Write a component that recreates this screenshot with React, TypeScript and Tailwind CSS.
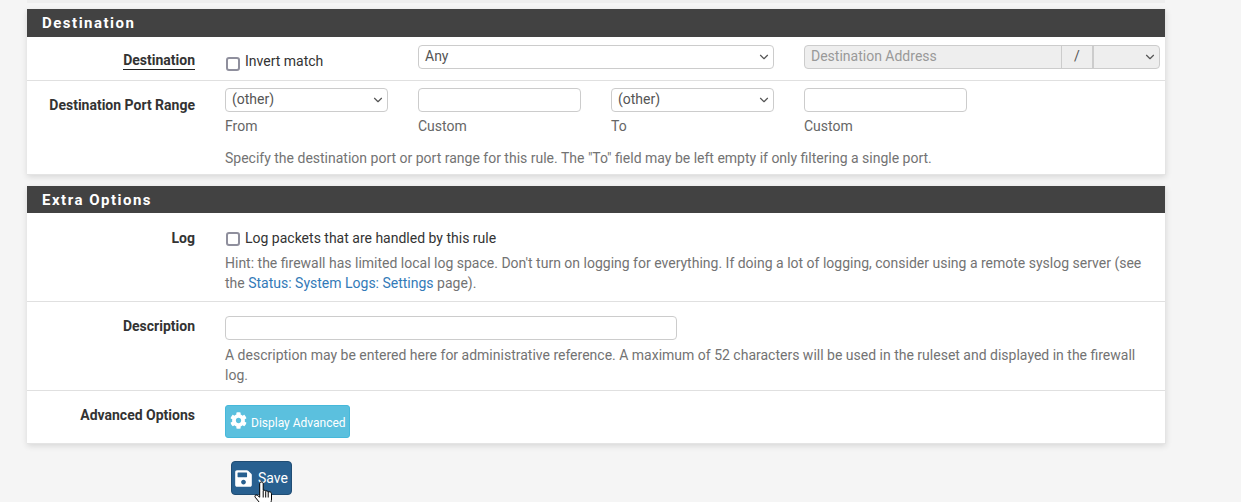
import React from "react";
import { FaCog, FaSave } from "react-icons/fa";
import { ChevronDown } from "lucide-react";

const Select = ({ value, className = "" }: { value?: string; className?: string }) => (
  <div
    className={`flex h-[24px] items-center justify-between rounded-[4px] border border-[#ccc] bg-white pl-[6px] pr-[2px] text-[14px] leading-[20px] text-[#555] ${className}`}
  >
    <span className="-mt-[2px]">{value}</span>
    <ChevronDown size={14} strokeWidth={2} className="text-[#555]" />
  </div>
);

const TextBox = ({ className = "" }: { className?: string }) => (
  <div className={`h-[24px] rounded-[4px] border border-[#ccc] bg-white ${className}`} />
);

const Checkbox = ({ className = "translate-y-[1px]" }: { className?: string }) => (
  <span className={`ml-[1px] h-[14px] w-[14px] shrink-0 rounded-[3px] border-2 border-[#8f8f9d] bg-white ${className}`} />
);

const SectionHeader = ({ title, className = "h-[28px]" }: { title: string; className?: string }) => (
  <h2 className={`bg-[#424242] pl-[15px] text-[15px] font-bold leading-[28px] tracking-[1.5px] text-white ${className}`}>
    {title}
  </h2>
);

const Label = ({ children }: { children: React.ReactNode }) => (
  <div className="w-[168px] shrink-0 text-right text-[14px] font-bold leading-[20px] text-[#333]">
    {children}
  </div>
);

export default function App() {
  return (
    <div className="h-[502px] overflow-hidden bg-[#f5f5f5] font-['Roboto',sans-serif] text-[14px] text-[#333]">
      <div className="mx-[27px] h-[3px] w-[1138px] bg-[#eeeeee]" />
      <div className="mt-[6px] ml-[27px] w-[1139px]">
        <section className="border-r border-b border-[#e4e4e4] bg-white shadow-[0_2px_6px_rgba(0,0,0,0.12)]">
          <SectionHeader title="Destination" />
          <div className="flex h-[43px]">
            <Label>
              <span className="mt-[14px] inline-block border-b border-[#222] leading-[18px]">Destination</span>
            </Label>
            <div className="ml-[30px] flex w-[163px] items-center gap-[5px] pt-[7px]">
              <Checkbox className="translate-y-[2px]" />
              <span className="-mt-[2px] leading-[20px]">Invert match</span>
            </div>
            <div className="ml-[30px] pt-[8px]">
              <Select value="Any" className="w-[356px]" />
            </div>
            <div className="mt-[8px] ml-[30px] flex h-[24px] w-[356px] rounded-[4px] border border-[#ccc] bg-[#eeeeee] text-[#999]">
              <span className="w-[257px] border-r border-[#ccc] pl-[6px] leading-[20px]">Destination Address</span>
              <span className="w-[32px] border-r-2 border-[#ccc] text-center leading-[20px] text-[#555]">/</span>
              <span className="flex flex-1 items-center justify-end pr-[2px]">
                <ChevronDown size={14} strokeWidth={2} className="text-[#555]" />
              </span>
            </div>
          </div>
          <div className="flex h-[94px] border-t border-[#e0e0e0]">
            <Label>
              <span className="mt-[14px] block">Destination Port Range</span>
            </Label>
            <div className="ml-[30px] pt-[7px]">
              <div className="grid grid-cols-[163px_163px_163px_163px] gap-x-[30px] leading-[20px] text-[#666]">
                <Select value="(other)" />
                <TextBox />
                <Select value="(other)" />
                <TextBox />
                <span className="mt-[4px]">From</span>
                <span className="mt-[4px]">Custom</span>
                <span className="mt-[4px]">To</span>
                <span className="mt-[4px]">Custom</span>
              </div>
              <p className="mt-[12px] leading-[20px] text-[#737373]">
                Specify the destination port or port range for this rule. The "To" field may be left empty if only filtering a single port.
              </p>
            </div>
          </div>
        </section>

        <section className="mt-[11px] border-r border-b border-[#e4e4e4] bg-white shadow-[0_2px_6px_rgba(0,0,0,0.12)]">
          <SectionHeader title="Extra Options" className="h-[27px]" />
          <div className="flex h-[88px] border-t border-[#fff]">
            <Label>
              <span className="mt-[14px] block">Log</span>
            </Label>
            <div className="ml-[30px] w-[920px] pt-[14px] leading-[20px]">
              <div className="flex items-center gap-[5px]">
                <Checkbox />
                <span>Log packets that are handled by this rule</span>
              </div>
              <p className="mt-[5px] text-[#737373]">
                Hint: the firewall has limited local log space. Don't turn on logging for everything. If doing a lot of logging, consider using a remote syslog server (see the <a className="text-[#337ab7]">Status: System Logs: Settings</a> page).
              </p>
            </div>
          </div>
          <div className="flex h-[89px] border-t border-[#e0e0e0]">
            <Label>
              <span className="mt-[14px] block">Description</span>
            </Label>
            <div className="ml-[30px] w-[920px] pt-[14px] leading-[20px]">
              <TextBox className="w-[452px]" />
              <p className="mt-[5px] text-[#737373]">
                A description may be entered here for administrative reference. A maximum of 52 characters will be used in the ruleset and displayed in the firewall log.
              </p>
            </div>
          </div>
          <div className="flex h-[53px] border-t border-[#e0e0e0]">
            <Label>
              <span className="mt-[14px] block">Advanced Options</span>
            </Label>
            <div className="ml-[30px] pt-[14px]">
              <button className="flex h-[33px] w-[125px] items-center gap-[4px] rounded-[3px] border border-[#46b8da] bg-[#5bc0de] pt-[2px] pl-[4px] text-[12px] text-white">
                <FaCog size={17} className="-mt-[5px]" />
                Display Advanced
              </button>
            </div>
          </div>
        </section>

        <div className="relative mt-[17px] ml-[204px] w-fit">
          <button className="flex h-[34px] w-[61px] items-center gap-[5px] rounded-[4px] border border-[#204d74] bg-[#286090] pl-[2px] text-[14px] text-white">
            <FaSave size={19} />
            Save
          </button>
          {/* mouse pointer sits on top of the button */}
          <svg viewBox="0 0 19 24" className="absolute top-[20px] left-[23px] h-[24px] w-[19px]">
            <path
              d="M7.500 1C8.600 1 9.200 1.800 9.200 2.800V9.500C10 9 11.300 9.200 11.700 10.100C12.500 9.700 13.800 9.900 14.200 10.900C15.200 10.500 17.500 10.800 17.500 12.800V18C17.500 20 16.800 21.500 16.300 24H7.500L1.200 16.200C0.300 15 1.600 13.200 3.200 14.200L5.700 16.200V2.800C5.700 1.800 6.400 1 7.500 1Z"
              fill="#fff"
              stroke="#000"
              strokeWidth="1"
            />
            <path d="M9.200 10V16.500M11.700 10.300V16.500M14.200 11V16.500" stroke="#000" strokeWidth="1" fill="none" />
          </svg>
        </div>
      </div>
    </div>
  );
}
